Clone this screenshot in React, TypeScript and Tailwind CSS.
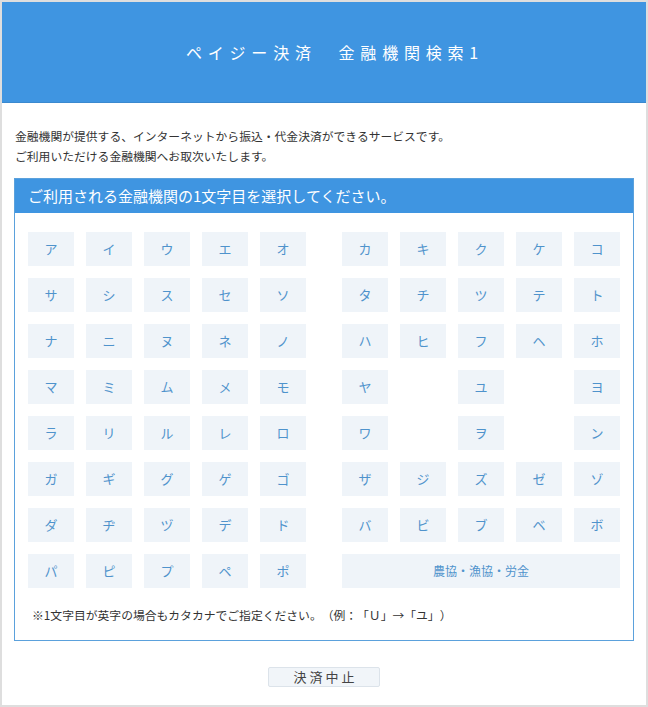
import React from "react";

const LEFT: string[][] = [
  ["ア", "イ", "ウ", "エ", "オ"],
  ["サ", "シ", "ス", "セ", "ソ"],
  ["ナ", "ニ", "ヌ", "ネ", "ノ"],
  ["マ", "ミ", "ム", "メ", "モ"],
  ["ラ", "リ", "ル", "レ", "ロ"],
  ["ガ", "ギ", "グ", "ゲ", "ゴ"],
  ["ダ", "ヂ", "ヅ", "デ", "ド"],
  ["パ", "ピ", "プ", "ペ", "ポ"],
];

const RIGHT: string[][] = [
  ["カ", "キ", "ク", "ケ", "コ"],
  ["タ", "チ", "ツ", "テ", "ト"],
  ["ハ", "ヒ", "フ", "ヘ", "ホ"],
  ["ヤ", "", "ユ", "", "ヨ"],
  ["ワ", "", "ヲ", "", "ン"],
  ["ザ", "ジ", "ズ", "ゼ", "ゾ"],
  ["バ", "ビ", "ブ", "ベ", "ボ"],
];

const font = { fontFamily: '"Noto Sans CJK JP", "Noto Sans", sans-serif' };

function Kana({ label }: { label: string }) {
  if (!label) return <div />;
  return (
    <button className="flex items-center justify-center bg-[#eff4f9] text-[13px] text-[#4f93cc] hover:bg-[#e2ecf6]">
      {label}
    </button>
  );
}

export default function App() {
  return (
    <div
      className="min-h-[707px] bg-white border-2 border-[#dedede] text-[#333] [text-spacing-trim:space-all]"
      style={font}
    >
      {/* Header */}
      <div className="h-[101px] flex items-center justify-center bg-[#3f95e1] border-b border-[#3a89cf]">
        <h1 className="text-[16px] font-normal text-white tracking-[5.8px] pl-[22px]">
          ペイジー決済　金融機関検索1
        </h1>
      </div>

      {/* Description */}
      <div className="pt-[23px] px-[13px] text-[11.8px] leading-[20px]">
        <p>金融機関が提供する、インターネットから振込・代金決済ができるサービスです。</p>
        <p>ご利用いただける金融機関へお取次いたします。</p>
      </div>

      {/* Panel */}
      <div className="mx-[12px] mt-[12px] border border-[#5ba1dc]">
        <div className="h-[34px] flex items-center px-[13px] bg-[#3f95e1] text-white text-[15px]">
          ご利用される金融機関の1文字目を選択してください。
        </div>

        <div className="px-[13px] pt-[19px] pb-[15px]">
          <div className="flex gap-[36px]">
            <div className="grid w-[278px] grid-cols-5 auto-rows-[34px] gap-[12px]">
              {LEFT.flat().map((k, i) => (
                <Kana key={i} label={k} />
              ))}
            </div>
            <div className="grid w-[278px] grid-cols-5 auto-rows-[34px] gap-[12px]">
              {RIGHT.flat().map((k, i) => (
                <Kana key={i} label={k} />
              ))}
              <button className="col-span-5 flex items-center justify-center bg-[#eff4f9] text-[12px] text-[#4f93cc]">
                農協・漁協・労金
              </button>
            </div>
          </div>

          <p className="mt-[17px] px-[4px] text-[11.8px] leading-[20px]">
            ※1文字目が英字の場合もカタカナでご指定ください。（例：「Ｕ」→「ユ」）
          </p>
        </div>
      </div>

      {/* Footer button */}
      <div className="flex justify-center pt-[26px] pb-[17px]">
        <button className="w-[112px] h-[20px] flex items-center justify-center rounded-[2px] border border-[#dce3ea] bg-[#f1f5f9] text-[13px] text-[#444] tracking-[3px] pl-[3px]">
          決済中止
        </button>
      </div>
    </div>
  );
}
